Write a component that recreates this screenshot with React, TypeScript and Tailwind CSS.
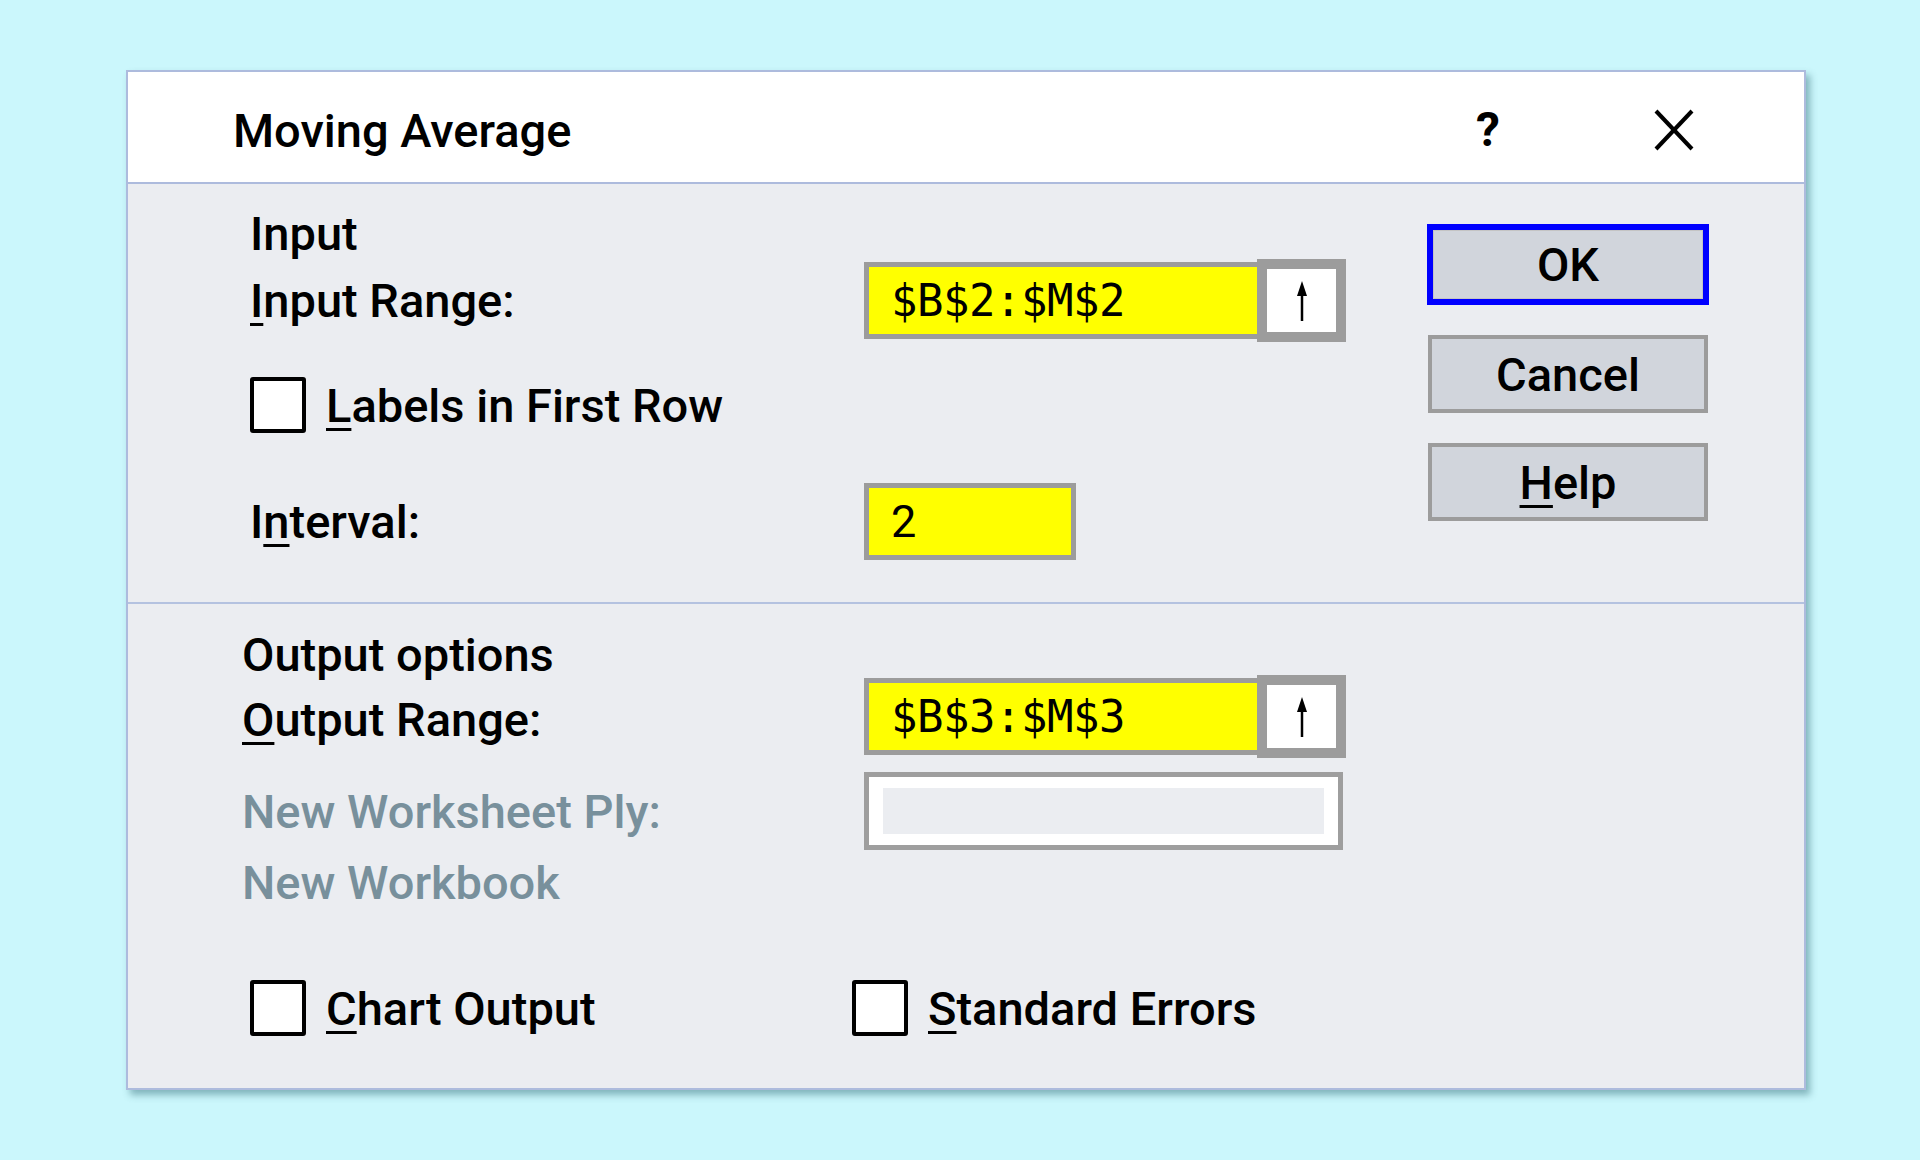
import type { ReactNode } from "react";

function U({ children }: { children: ReactNode }) {
  return <span className="underline decoration-[3px] underline-offset-[6px]">{children}</span>;
}

function Checkbox({ children }: { children: ReactNode }) {
  return (
    <div className="flex h-[56px] items-center gap-[20px]">
      <div className="h-[56px] w-[56px] rounded-[3px] border-[4px] border-black bg-white" />
      <span>{children}</span>
    </div>
  );
}

function ArrowUp() {
  return (
    <svg width="20" height="42" viewBox="0 0 20 42">
      <line x1="10" y1="12" x2="10" y2="41" stroke="black" strokeWidth="2.5" />
      <polygon points="10,1 5,16 15,16" fill="black" />
    </svg>
  );
}

function RangeField({ value }: { value: string }) {
  return (
    <div className="flex items-center">
      <div className="flex h-[77px] w-[393px] items-center border-[5px] border-r-0 border-[#9c9c9c] bg-[#ffff00] pl-[22px] font-['DejaVu_Sans_Mono',monospace] text-[44px] font-normal tracking-[-0.5px]">
        {value}
      </div>
      <div className="flex h-[83px] w-[89px] items-center justify-center border-[10px] border-[#9c9c9c] bg-white">
        <ArrowUp />
      </div>
    </div>
  );
}

export default function App() {
  return (
    <div className="min-h-screen w-full bg-[#cbf7fc] font-['Roboto',sans-serif] text-[47px] font-medium leading-none text-black">
      <div className="pl-[126px] pt-[70px]">
        <div className="w-[1680px] border-2 border-[#adbbdd] bg-[#ebedf1] shadow-[4px_5px_7px_rgba(40,100,110,0.45)]">
          {/* title bar */}
          <div className="flex h-[112px] items-center border-b-2 border-[#adbbdd] bg-white pt-[6px] pl-[105px] pr-[110px]">
            <span>Moving Average</span>
            <span className="ml-auto text-[48px] font-bold">?</span>
            <svg className="ml-[154px]" width="40" height="42" viewBox="0 0 40 42">
              <line x1="2" y1="2" x2="38" y2="40" stroke="black" strokeWidth="4" />
              <line x1="38" y1="2" x2="2" y2="40" stroke="black" strokeWidth="4" />
            </svg>
          </div>

          {/* input section */}
          <div className="flex border-b-2 border-[#b4c2e0]">
            <div className="flex flex-1 flex-col pl-[122px] pt-[19px] pb-[42px]">
              <div className="flex h-[56px] items-center pt-[4px]">Input</div>
              <div className="flex h-[83px] items-center">
                <div className="w-[614px]">
                  <U>I</U>nput Range:
                </div>
                <RangeField value="$B$2:$M$2" />
              </div>
              <div className="mt-[35px]">
                <Checkbox>
                  <U>L</U>abels in First Row
                </Checkbox>
              </div>
              <div className="mt-[50px] flex h-[77px] items-center">
                <div className="w-[614px]">
                  I<U>n</U>terval:
                </div>
                <div className="flex h-[77px] w-[212px] items-center border-[5px] border-[#9c9c9c] bg-[#ffff00] pl-[22px] text-[45px] font-normal">
                  2
                </div>
              </div>
            </div>
            <div className="mr-[95px] flex w-[282px] flex-col items-center gap-[30px] pt-[40px]">
              <button className="flex h-[81px] w-[282px] items-center justify-center border-[6px] border-[#0000ff] bg-[#d1d5dc] shadow-[inset_0_0_0_1px_#c4c4c4]">
                OK
              </button>
              <button className="flex h-[78px] w-[280px] items-center justify-center border-[4px] border-[#9c9c9c] bg-[#d1d5dc]">
                Cancel
              </button>
              <button className="flex h-[78px] w-[280px] items-center justify-center border-[4px] border-[#9c9c9c] bg-[#d1d5dc]">
                <span>
                  <U>H</U>elp
                </span>
              </button>
            </div>
          </div>

          {/* output section */}
          <div className="flex flex-col pl-[114px] pt-[28px] pb-[52px]">
            <div className="flex h-[44px] items-center">Output options</div>
            <div className="flex h-[81px] items-center">
              <div className="w-[622px] pt-[6px]">
                <U>O</U>utput Range:
              </div>
              <RangeField value="$B$3:$M$3" />
            </div>
            <div className="mt-[15px] flex h-[78px] items-center">
              <div className="w-[622px] text-[#78909c]">New Worksheet Ply:</div>
              <div className="h-[78px] w-[479px] border-[5px] border-[#9e9e9e] bg-white px-[14px] py-[11px]">
                <div className="h-full w-full bg-[#ebedf1]" />
              </div>
            </div>
            <div className="mt-[4px] flex h-[56px] items-center text-[#78909c]">New Workbook</div>
            <div className="mt-[70px] flex items-center pl-[8px]">
              <div className="w-[602px]">
                <Checkbox>
                  <U>C</U>hart Output
                </Checkbox>
              </div>
              <Checkbox>
                <U>S</U>tandard Errors
              </Checkbox>
            </div>
          </div>
        </div>
      </div>
    </div>
  );
}
